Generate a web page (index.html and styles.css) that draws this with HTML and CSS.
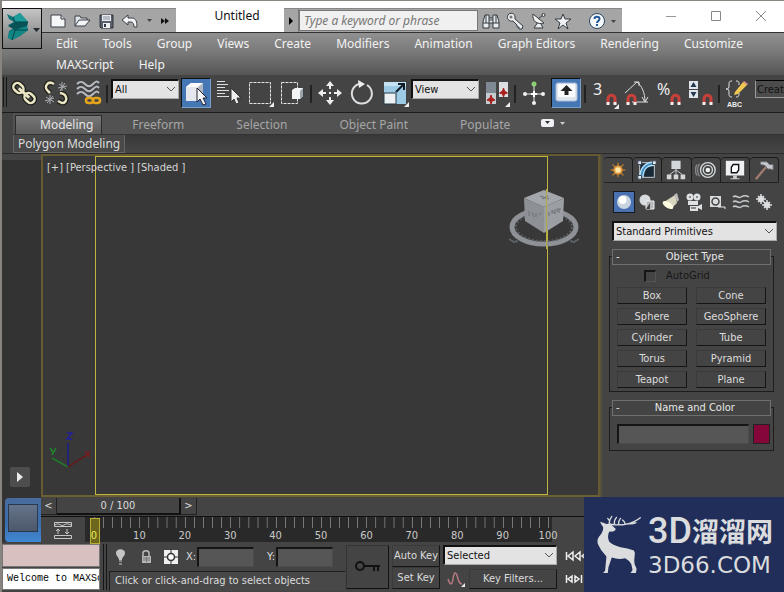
FILE: index.html
```html
<!DOCTYPE html>
<html lang="en">
<head>
<meta charset="utf-8">
<title>Untitled</title>
<link rel="stylesheet" href="styles.css">
</head>
<body>
<div class="app">
  <header class="header">
    <div class="titlebar">
      <div class="quick">
        <button class="qbtn" aria-label="New"><svg width="20" height="20" viewBox="0 0 20 20"><path d="M3 4h10l4 4v8H3z" fill="#f4f6f8" stroke="#3b4048"/><path d="M13 4v4h4" fill="#cfd4da" stroke="#3b4048"/></svg></button>
        <button class="qbtn" aria-label="Open"><svg width="20" height="20" viewBox="0 0 20 20"><path d="M3 15V5h5l1 2h6v3" fill="#dfe3e8" stroke="#3b4048"/><path d="M3 15l4-6h11l-5 6z" fill="#f2f4f6" stroke="#3b4048"/></svg></button>
        <button class="qbtn" aria-label="Save"><svg width="20" height="20" viewBox="0 0 20 20"><path d="M4 4h13v13H5l-1-1z" fill="#59606c" stroke="#30353d"/><path d="M6 4h9v6H6z" fill="#e9ecef"/><path d="M7 6h7M7 8h7" stroke="#8a9099"/><path d="M7 12h7v5H7z" fill="#eef0f2"/><path d="M8 13h2v3H8z" fill="#30353d"/></svg></button>
        <button class="qbtn" aria-label="Undo"><svg width="20" height="20" viewBox="0 0 20 20"><path d="M2 9l6-5v3h4c4 0 5 4 5 9h-3c0-3-1-5-3-5H8v3z" fill="#f2f4f6" stroke="#3b4048" stroke-linejoin="round"/></svg></button>
        <button class="qbtn narrow" aria-label="Undo list"><svg width="8" height="8" viewBox="0 0 8 8"><path d="M2 2h5L4.500 5z" fill="#444"/></svg></button>
        <button class="qbtn narrow" aria-label="More"><svg width="10" height="8" viewBox="0 0 10 8"><path d="M1 1l4 3-4 3zM5 1l4 3-4 3z" fill="#111"/></svg></button>
      </div>
      <h1 class="doc">Untitled</h1>
      <div class="search">
        <button class="sarrow" aria-label="Search menu"><svg width="8" height="10" viewBox="0 0 8 10"><path d="M2 1l4 4-4 4z" fill="#000"/></svg></button>
        <input class="sinput" type="text" placeholder="Type a keyword or phrase" aria-label="Search">
        <button class="sbtn" aria-label="Find"><svg width="18" height="18" viewBox="0 0 18 18"><path d="M3 3h4v3h4V3h4l2 7v6h-6v-5H7v5H1v-6z" fill="#e9ecee" stroke="#333b42"/><path d="M1 11h6M11 11h6M7 6v5M11 6v5M7 8h4M4 3v8M14 3v8" stroke="#333b42"/></svg></button>
        <button class="sbtn" aria-label="Key"><svg width="18" height="18" viewBox="0 0 18 18"><path d="M2 3c2-3 7-2 7 2v2l8 7-1 3h-3v-2h-2v-2L7 9C3 10 0 6 2 3z" fill="#e9ecee" stroke="#333b42"/><circle cx="5" cy="5" r="1.500" fill="#777"/></svg></button>
        <button class="sbtn" aria-label="Communication"><svg width="18" height="18" viewBox="0 0 18 18"><path d="M8 10l-4 6h9l-3-6z" fill="#e9ecee" stroke="#333b42"/><path d="M3 2c-1 7 4 11 11 9z" fill="#f2f2f2" stroke="#333b42"/><path d="M8 7l5-4" stroke="#333b42"/><circle cx="13.500" cy="3" r="1.500" fill="#eee" stroke="#333b42"/></svg></button>
        <button class="sbtn" aria-label="Favorites"><svg width="18" height="18" viewBox="0 0 18 18"><path d="M9 2l2 5h6l-5 4 2 6-5-4-5 4 2-6-5-4h6z" fill="#eef0f2" stroke="#333b42"/></svg></button>
        <button class="sbtn help" aria-label="Help"><svg width="18" height="18" viewBox="0 0 18 18"><circle cx="9" cy="9" r="7.500" fill="#f6f8fa" stroke="#2d4763"/><path d="M6.500 7c0-3 5-3 5 0 0 2-2.500 2-2.500 4" fill="none" stroke="#225a9a" stroke-width="2"/><path d="M8 12h2v2H8z" fill="#225a9a"/></svg></button>
        <button class="sbtn small" aria-label="Help menu"><svg width="8" height="8" viewBox="0 0 8 8"><path d="M1 3h5L3.500 6z" fill="#444"/></svg></button>
      </div>
      <div class="wincontrols">
        <button aria-label="Minimize"><svg width="12" height="12" viewBox="0 0 12 12"><path d="M1 6.500h10" stroke="#999"/></svg></button>
        <button aria-label="Maximize"><svg width="12" height="12" viewBox="0 0 12 12"><path d="M1.500 1.500h9v9h-9z" fill="none" stroke="#888"/></svg></button>
        <button aria-label="Close"><svg width="12" height="12" viewBox="0 0 12 12"><path d="M1 1l10 10M11 1L1 11" stroke="#888"/></svg></button>
      </div>
    </div>
    <nav class="menu">
      <a href="#">Edit</a><a href="#">Tools</a><a href="#">Group</a><a href="#">Views</a><a href="#">Create</a><a href="#">Modifiers</a><a href="#">Animation</a><a href="#">Graph Editors</a><a href="#">Rendering</a><a href="#">Customize</a><a href="#">MAXScript</a><a href="#">Help</a>
    </nav>
    <button class="appbtn" aria-label="Application menu"><svg width="38" height="38" viewBox="0 0 38 38"><path d="M4 4l6 3 7-4 8 9-1 4 1 4-8 6-8 4-4-2 1-7 5-3-6-3 6-3-5-3z" fill="#0d7377"/><path d="M4 4l6 3 2 5h13l-8-9-7 4z" fill="#1d9c9a"/><path d="M5 16l7-4h13l-1 4-12 4z" fill="#075357"/><path d="M6 22l6-2 12-4 1 4-8 6-8 4-4-2z" fill="#128685"/><path d="M10 7l2 5h13M12 20l-3 10M12 20l13 0" stroke="#064448" fill="none"/><path d="M30 18h7l-3.500 4z" fill="#222b30"/></svg></button>
  </header>

  <div class="toolbar">
    <span class="grip"></span>
    <button class="tool" aria-label="Link"><svg viewBox="0 0 32 32"><g transform="rotate(42 16 16)"><g fill="none" stroke="#1c1c16" stroke-width="5"><rect x="3" y="12" width="11" height="8" rx="4"/><rect x="18" y="12" width="11" height="8" rx="4"/></g><g fill="none" stroke="#e8e4c4" stroke-width="2.500"><rect x="3" y="12" width="11" height="8" rx="4"/><rect x="18" y="12" width="11" height="8" rx="4"/><path d="M9 16h14" stroke-width="3"/></g></g></svg></button>
    <button class="tool" aria-label="Unlink"><svg viewBox="0 0 32 32"><path d="M14 7c-6-4-11 3-6 7l2 2M20 16c8 1 8 10 2 10l-4-2" fill="none" stroke="#1c1c16" stroke-width="5"/><path d="M14 7c-6-4-11 3-6 7l2 2M20 16c8 1 8 10 2 10l-4-2" fill="none" stroke="#e8e4c4" stroke-width="2.500"/><path d="M19 7l7 5M25 6l-5 8M18 11l9-2M22 5v9M6 20l8 5M13 19l-6 7M5 24l9-3M10 18v9" stroke="#a9adb2"/></svg></button>
    <button class="tool" aria-label="Bind to space warp"><svg viewBox="0 0 32 32"><path d="M5 7c3-3 5-3 8 0s5 3 8 0 4-3 6-1M5 12c3-3 5-3 8 0s5 3 8 0 4-3 6-1M5 17c3-3 5-3 8 0s5 3 8 0 4-3 6-1" fill="none" stroke="#b6bcc2" stroke-width="2"/><g fill="none" stroke="#e5a51b" stroke-width="2.500"><rect x="14" y="21" width="7" height="5" rx="2.500"/><rect x="21" y="21" width="7" height="5" rx="2.500"/></g></svg></button>
    <span class="sep"></span>
    <label class="combo bar"><select aria-label="Selection filter"><option>All</option></select><svg viewBox="0 0 10 6"><path d="M1 1l4 4 4-4"/></svg></label>
    <button class="tool active" aria-label="Select object"><svg viewBox="0 0 32 32"><path d="M6 10l5-4h12v13l-5 5H6z" fill="#e4e8ec"/><path d="M6 10l5-4h12l-5 4z" fill="#fff"/><path d="M18 10l5-4v13l-5 5z" fill="#aeb6bf"/><path d="M17 11v14l3-3 3 6 3-1-3-6h4z" fill="#f5f5f5" stroke="#223"/></svg></button>
    <button class="tool" aria-label="Select by name"><svg viewBox="0 0 32 32"><path d="M5 4.500h8M5 7.500h11M5 10.500h8M5 13.500h12M5 16.500h8M5 19.500h12" stroke="#dcdfe2"/><path d="M19 11v14l3-3 2 5 3-1-2-5h4z" fill="#eee" stroke="#333"/></svg></button>
    <button class="tool" aria-label="Selection region"><svg viewBox="0 0 32 32"><path d="M5.500 5.500h21v21h-21z" fill="none" stroke="#e6e6e6" stroke-dasharray="3 1"/><path d="M30 25v5h-5z" fill="#eee"/></svg></button>
    <button class="tool" aria-label="Window crossing"><svg viewBox="0 0 32 32"><path d="M5.500 5.500h16v21h-16z" fill="none" stroke="#e6e6e6" stroke-dasharray="3 1"/><path d="M16 13l3-2h8v8l-3 3h-8z" fill="#f2f4f6"/><path d="M24 14l3-3v8l-3 3z" fill="#9ca5ad"/></svg></button>
    <span class="sep"></span>
    <button class="tool" aria-label="Move"><svg viewBox="0 0 32 32"><g fill="#eceef0"><path d="M16 4l4 5h-8zM16 28l4-5h-8zM4 16l5-4v8zM28 16l-5-4v8zM15 9h2v3h-2zM15 20h2v3h-2zM9 15h3v2H9zM20 15h3v2h-3zM15 15h2v2h-2z"/></g></svg></button>
    <button class="tool" aria-label="Rotate"><svg viewBox="0 0 32 32"><path d="M21 8a10 10 0 1 1-8-1" fill="none" stroke="#dde0e2" stroke-width="2"/><path d="M12 3l7 4-6 4z" fill="#eee"/></svg></button>
    <button class="tool" aria-label="Scale"><svg viewBox="0 0 32 32"><path d="M6 5h22v22H6z" fill="#9dcbe6"/><path d="M6 5h22v4H6z" fill="#c5e2f2"/><path d="M6 16h12v11H6z" fill="#eef1f3" stroke="#263845"/><path d="M18 15l7-7M20 7h6v6" stroke="#101c28" stroke-width="2" fill="none"/><path d="M31 25v5h-5z" fill="#eee"/></svg></button>
    <label class="combo bar"><select aria-label="Reference coordinate system"><option>View</option></select><svg viewBox="0 0 10 6"><path d="M1 1l4 4 4-4"/></svg></label>
    <button class="tool" aria-label="Pivot center"><svg viewBox="0 0 32 32"><path d="M6 5h10v15H6z" fill="#7f8994"/><path d="M6 16h10v11H6z" fill="#c6cbd0"/><path d="M19 5h9v15h-9z" fill="#dcdfe2"/><path d="M11 18l1 3 3 2-3 1-1 3-1-3-3-1 3-2zM23.500 11l1 3 3 2-3 1-1 3-1-3-3-1 3-2z" fill="#a81f1b" stroke="#a81f1b"/><path d="M30 25v5h-5z" fill="#eee"/></svg></button>
    <span class="sep"></span>
    <button class="tool" aria-label="Manipulate"><svg viewBox="0 0 32 32"><path d="M16 6v20M6 17h20" stroke="#e8eaec" stroke-dasharray="8 2"/><path d="M13 17h6M16 14v6" stroke="#fff" stroke-width="2"/><g fill="#f0f2f3"><circle cx="7" cy="17" r="2"/><circle cx="25" cy="17" r="2"/><circle cx="16" cy="26" r="2"/></g><circle cx="16" cy="7" r="2.500" fill="#8ad074"/></svg></button>
    <button class="tool active" aria-label="Keyboard override"><svg viewBox="0 0 32 32"><rect x="6" y="6" width="21" height="18" rx="2" fill="#dfe5ec" stroke="#a9bedb"/><rect x="8" y="7" width="17" height="13" rx="1" fill="#fafbfc"/><path d="M16.500 8l6 6h-4v4h-4v-4h-4z" fill="#222"/></svg></button>
    <span class="sep"></span>
    <button class="tool snap" aria-label="Snaps toggle"><span>3</span><svg viewBox="0 0 32 32"><use href="#magnet"/><path d="M31 27v5h-5z" fill="#eee"/></svg></button>
    <button class="tool snap" aria-label="Angle snap"><svg viewBox="0 0 32 32"><path d="M5 16L17 5M12 25h16M17 5c5 4 8 11 8 20M14 5h5v4M22 20l3 5 3-5" fill="none" stroke="#dfe1e3"/><use href="#magnet" x="-12"/></svg></button>
    <button class="tool snap" aria-label="Percent snap"><span>%</span><svg viewBox="0 0 32 32"><use href="#magnet"/></svg></button>
    <button class="tool snap" aria-label="Spinner snap"><svg viewBox="0 0 32 32"><path d="M5 4h9v8H5zM5 13h9v8H5z" fill="#dfe5ec"/><path d="M9.500 5l3 5h-6zM9.500 20l3-5h-6z" fill="#24384f"/><use href="#magnet"/></svg></button>
    <span class="sep"></span>
    <button class="tool named" aria-label="Edit named selection sets"><svg viewBox="0 0 32 32"><path d="M10 4c-3 0-3 1-3 4s0 4-3 4c3 0 3 1 3 4s0 4 3 4M14 4c3 0 3 1 3 4M14 20c3 0 3-1 3-4" fill="none" stroke="#e4e4e4"/><path d="M13 15L21 5l4 3-9 9-4 1z" fill="#f0c851"/><path d="M21 5l1-1 4 3-1 1z" fill="#e99"/></svg><span>ABC</span></button>
    <input class="setname" type="text" value="Create Selection Se" aria-label="Named selection set">
  </div>
  <svg class="defs" width="0" height="0"><defs><g id="magnet"><path d="M20 27v-5c0-5 7-5 7 0v5" fill="none" stroke="#c9403a" stroke-width="3"/><path d="M18.500 25h3v3h-3zM25.500 25h3v3h-3z" fill="#eee"/></g></defs></svg>

  <div class="ribbon">
    <div class="tabs">
      <button class="tab on">Modeling</button><button class="tab">Freeform</button><button class="tab">Selection</button><button class="tab">Object Paint</button><button class="tab">Populate</button>
      <button class="ribmin" aria-label="Minimize ribbon"><svg width="24" height="8" viewBox="0 0 24 8"><rect width="13" height="8" rx="2" fill="#f0f1f6"/><path d="M4 2h5L6.500 5z" fill="#333"/><path d="M19 3h5l-2.500 3z" fill="#ccc"/></svg></button>
    </div>
    <div class="ribpanel"><button>Polygon Modeling</button></div>
  </div>

  <div class="workspace">
    <aside class="rail">
      <button class="play" aria-label="Expand layouts"><svg width="8" height="10" viewBox="0 0 8 10"><path d="M1 0l6 5-6 5z" fill="#eee"/></svg></button>
      <button class="layout" aria-label="Viewport layout"><span></span></button>
    </aside>

    <main class="viewport">
      <div class="safe"></div>
      <p class="vlabel"><span>[+]</span><span>[Perspective ]</span><span>[Shaded ]</span></p>
      <svg class="axis" width="50" height="44" viewBox="0 0 50 44"><g fill="none" stroke-width="1.500"><path d="M22 38V14" stroke="#1c1c8c"/><path d="M22 38L6 29" stroke="#1e7a2a"/><path d="M22 38l17-11" stroke="#611a1c"/><path d="M21 4h5l-5 6h5" stroke="#20209a"/><path d="M4 19l3 4M10 19l-4 7" stroke="#1e8a2a"/><path d="M39 22l5 6M44 22l-5 6" stroke="#7b1a1c"/></g></svg>
      <svg class="cube" width="72" height="60" viewBox="0 0 72 60"><path d="M1 50l5 3 4-1M71 50l-5 3-4-1" stroke="#5c6068" stroke-width="2" fill="none"/><ellipse cx="36" cy="38" rx="32" ry="17" fill="none" stroke="#8e9196" stroke-width="5"/><ellipse cx="36" cy="38" rx="28" ry="14" fill="none" stroke="#5a5d62" stroke-width="2" stroke-dasharray="2 2"/><path d="M16 9L36 1l20 8-20 9z" fill="#a3a6aa"/><path d="M16 9l20 9v26L17 32z" fill="#8d9095"/><path d="M56 9l-20 9v26l19-12z" fill="#9b9ea3"/><path d="M32 7l9 3M34 10l6-3M21 22v5M24 23l2 5M28 24v4M31 25h2M41 27v-4M44 25v-4l3 4v-5M49 23v-3h4M51 20v4" stroke="#6c7076" fill="none"/><path d="M38.500 0v60" stroke="#b2aa42"/></svg>
    </main>

    <aside class="panel">
      <div class="ptabs">
        <button class="on" aria-label="Create"><svg viewBox="0 0 24 24"><path d="M12 4v16M4 12h16M6 6l12 12M18 6L6 18" stroke="#b5742b" stroke-width="1.500"/><circle cx="12" cy="12" r="5" fill="#e09a3c"/><circle cx="12" cy="12" r="3" fill="#ffe9ae"/></svg></button>
        <button aria-label="Modify"><svg viewBox="0 0 24 24"><path d="M4 4h16v16H4z" fill="#182a38" stroke="#cfd6dc"/><path d="M6 20C6 11 11 5 20 5" fill="none" stroke="#b9e1f6" stroke-width="5"/><path d="M6 20C6 11 11 5 20 5" fill="none" stroke="#3c8ac4" stroke-width="2"/><path d="M2 2h4v4H2zM2 18h4v4H2zM18 2h4v4h-4z" fill="#e6eaee" stroke="#345"/></svg></button>
        <button aria-label="Hierarchy"><svg viewBox="0 0 24 24"><path d="M7 2h10v9H7zM2 17h5v5H2zM9.500 17h5v5h-5zM17 17h5v5h-5z" fill="#d3d7da"/><path d="M12 11v6M12 12l-7 5M12 12l7 5" stroke="#d3d7da"/></svg></button>
        <button aria-label="Motion"><svg viewBox="0 0 24 24"><g fill="none" stroke="#d5d9dc" stroke-width="1.500"><circle cx="14" cy="12" r="8"/><circle cx="14" cy="12" r="5"/><path d="M5 5c-3 4-3 10 0 14M2 6c-2 4-2 8 0 12" stroke="#888"/></g><circle cx="14" cy="12" r="2.500" fill="#eee"/></svg></button>
        <button aria-label="Display"><svg viewBox="0 0 24 24"><path d="M2 2h20v16H2z" fill="#eef0f2"/><path d="M10 18h4v3H10zM7 21h10v1H7z" fill="#ccc"/><path d="M8 9l2-3h6v6l-2 3H8z" fill="#fff" stroke="#111" stroke-width="1.500"/></svg></button>
        <button aria-label="Utilities"><svg viewBox="0 0 24 24"><path d="M3 22L14 9" stroke="#a07d70" stroke-width="2.500"/><path d="M8 3h7l3 3h4v6l-3-1h-3l-3-4-5-1z" fill="#c5c9ce" stroke="#666"/></svg></button>
      </div>
      <div class="cats">
        <button class="on" aria-label="Geometry"><svg viewBox="0 0 20 20"><circle cx="10" cy="10" r="7" fill="#c9d4e0"/><circle cx="8.500" cy="8" r="4" fill="#fff"/></svg></button>
        <button aria-label="Shapes"><svg viewBox="0 0 20 20"><circle cx="8" cy="8" r="5.500" fill="#d9dcde"/><path d="M9 9h8v8H9z" fill="#b5b9bd" stroke="#eee"/><path d="M9 17l4-6v6z" fill="#444"/></svg></button>
        <button aria-label="Lights"><svg viewBox="0 0 20 20"><path d="M3 10L14 3l2 8-5 5z" fill="#d9d6c0"/><ellipse cx="7" cy="13" rx="6" ry="3" transform="rotate(32 7 13)" fill="#fffbe0"/><path d="M13 3l3-2 2 7-2 2z" fill="#bbb"/></svg></button>
        <button aria-label="Cameras"><svg viewBox="0 0 20 20"><g fill="#dfe2e4"><circle cx="6" cy="5" r="3.500"/><circle cx="13" cy="5" r="3.500"/><path d="M4 9h10v4H4zM6 14h8v5H6zM14 14l4-2v6l-4-2z"/></g><path d="M5 5h2M12 5h2M7 16h5" stroke="#333"/></svg></button>
        <button aria-label="Helpers"><svg viewBox="0 0 20 20"><path d="M3 4h11v11H3z" fill="#d8dbde"/><circle cx="8.500" cy="9.500" r="3.500" fill="none" stroke="#444" stroke-width="1.500"/><path d="M11 15h7v2" fill="none" stroke="#e8e8e8"/></svg></button>
        <button aria-label="Space warps"><svg viewBox="0 0 20 20"><path d="M2 5c3-3 5 2 8 0s5-2 8 0M2 10c3-3 5 2 8 0s5-2 8 0M2 15c3-3 5 2 8 0s5-2 8 0" fill="none" stroke="#c5c9cc" stroke-width="1.500"/></svg></button>
        <button aria-label="Systems"><svg viewBox="0 0 20 20"><path d="M7 2v10M2 7h10M4 4l6 6M10 4l-6 6M13 8v10M8 13h10M10 10l6 6M16 10l-6 6" stroke="#dcdfe1" stroke-width="1.500"/><circle cx="7" cy="7" r="3" fill="#dcdfe1"/><circle cx="13" cy="13" r="3" fill="#dcdfe1"/></svg></button>
      </div>
      <label class="combo wide"><select aria-label="Category"><option>Standard Primitives</option></select><svg viewBox="0 0 10 6"><path d="M1 1l4 4 4-4"/></svg></label>
      <section class="rollout first">
        <h2><span>-</span>Object Type</h2>
        <label class="auto"><input type="checkbox" disabled>AutoGrid</label>
        <div class="objs"><button>Box</button><button>Cone</button><button>Sphere</button><button>GeoSphere</button><button>Cylinder</button><button>Tube</button><button>Torus</button><button>Pyramid</button><button>Teapot</button><button>Plane</button></div>
      </section>
      <section class="rollout">
        <h2><span>-</span>Name and Color</h2>
        <div class="name"><input type="text" aria-label="Object name"><button class="swatch" aria-label="Object color"></button></div>
      </section>
    </aside>

    <div class="time">
      <div class="slider"><button aria-label="Previous frame">&lt;</button><button class="thumb">0 / 100</button><button aria-label="Next frame">&gt;</button></div>
      <div class="track">
        <button class="curve" aria-label="Mini curve editor"><svg width="20" height="20" viewBox="0 0 20 20"><path d="M1.500 2.500h17v4h-17zM1.500 15.500h17v3h-17z" fill="none" stroke="#c8c8c8"/><path d="M2 5c4-3 6 2 9 0s4-1 7 0M5 14V9M3 11l2-2 2 2M14 9v5M12 12l2 2 2-2" fill="none" stroke="#c8c8c8"/></svg></button>
        <div class="ruler"><div class="cell now"><span>0</span></div><div class="cell"><span>10</span></div><div class="cell"><span>20</span></div><div class="cell"><span>30</span></div><div class="cell"><span>40</span></div><div class="cell"><span>50</span></div><div class="cell"><span>60</span></div><div class="cell"><span>70</span></div><div class="cell"><span>80</span></div><div class="cell"><span>90</span></div><div class="cell last"><span>100</span></div></div>
      </div>
    </div>

    <footer class="status">
      <div class="script"><input class="macro" type="text" aria-label="Macro recorder"><input class="listener" type="text" value="Welcome to MAXScript." aria-label="Listener"></div>
      <span class="grip low"></span>
      <div class="coords">
        <div class="crow">
          <button aria-label="Isolate"><svg width="16" height="18" viewBox="0 0 16 18"><path d="M6 12c0-3-3-4-3-7 0-5 9-5 9 0 0 3-3 4-3 7z" fill="#c5c5c5"/><path d="M6 12h3v2H6zM6 15h3v2H6z" fill="#888"/></svg></button>
          <button aria-label="Lock"><svg width="16" height="18" viewBox="0 0 16 18"><path d="M5 8V5c0-3 6-3 6 0v3" fill="none" stroke="#bbb" stroke-width="1.500"/><path d="M4 8h9v7H4z" fill="#b5b5b5"/><path d="M5 10h7M5 12h7M8.500 9v5" stroke="#777"/></svg></button>
          <button aria-label="Absolute mode"><svg width="16" height="18" viewBox="0 0 16 18"><path d="M1 2h14v14H1z" fill="#f0f0f0"/><path d="M8 1v4M8 12v4M1 9h4M11 9h4" stroke="#333"/><circle cx="8" cy="9" r="3.500" fill="#fff" stroke="#333" stroke-width="1.500"/></svg></button>
          <label>X:<input type="text"></label>
          <label>Y:<input type="text"></label>
        </div>
        <p class="prompt">Click or click-and-drag to select objects</p>
      </div>
      <button class="setkey" aria-label="Set keys"><svg width="26" height="14" viewBox="0 0 26 14"><circle cx="5" cy="6" r="4" fill="none" stroke="#111" stroke-width="2"/><path d="M9 5h16v2H9zM18 7h2v4h-2zM22 7h2v4h-2z" fill="#111"/></svg></button>
      <div class="keys">
        <button>Auto Key</button>
        <label class="combo"><select aria-label="Key set"><option>Selected</option></select><svg viewBox="0 0 10 6"><path d="M1 1l4 4 4-4"/></svg></label>
        <button>Set Key</button>
        <div class="filters"><button class="tangent" aria-label="Tangents"><svg width="20" height="18" viewBox="0 0 20 18"><path d="M2 9c2 6 4 7 5 0s3-9 5 0c1 3 2 5 4 5" fill="none" stroke="#b87983" stroke-width="1.500"/><path d="M19 13v4h-4z" fill="#eee"/></svg></button><button class="kf">Key Filters...</button></div>
      </div>
      <div class="transport">
        <button aria-label="Go to start"><svg width="24" height="12" viewBox="0 0 24 12"><path d="M1.500 2v8M8 2L3 6l5 4zM15 2l-5 4 5 4zM22 2l-5 4 5 4z" fill="none" stroke="#eee" stroke-width="1.500"/></svg></button>
        <button aria-label="Key mode"><svg width="24" height="12" viewBox="0 0 24 12"><path d="M1.500 2v8M7 3L3 6l4 3zM10 3l4 3-4 3zM16.500 2v8" fill="none" stroke="#eee" stroke-width="1.500"/></svg></button>
      </div>
    </footer>
  </div>

  <div class="brand">
    <svg width="47" height="62" viewBox="45 70 140 185"><path d="M57 96Q66 99 76 103L88 101Q94 108 104 118Q103 124 96 125L84 126Q78 140 84 155Q94 166 118 172Q145 176 158 182Q164 190 160 200Q158 210 160 222L166 236 164 249H148L154 240 150 222Q142 210 132 205Q112 210 92 203L82 232 80 249H66L72 242 76 200Q58 182 50 162Q46 148 58 136Q68 122 66 112Q60 104 57 96Z" fill="#dadcde"/><path d="M84 103Q84 90 92 80M88 103Q112 108 136 103T177 84M100 104Q98 92 106 83M112 104Q111 94 118 86M132 103Q130 95 124 91M140 102Q154 104 164 99M86 94L80 86" fill="none" stroke="#dadcde" stroke-width="4" stroke-linecap="round"/></svg>
    <div class="words"><p class="cn"><b>3D</b><span lang="zh">溜溜网</span></p><p class="en">3D66.COM</p></div>
  </div>
</div>
</body>
</html>
```
FILE: styles.css
```css
* { box-sizing: border-box; }
body {
  margin: 0;
  background: #444;
  color: #dcdcdc;
  font: 11px/14px "DejaVu Sans Condensed", "Noto Sans", sans-serif;
}
h1, h2, p { margin: 0; font-weight: normal; }
button {
  margin: 0; padding: 0; border: 0;
  background: none; color: inherit; font: inherit;
  display: flex; align-items: center; justify-content: center;
}
input, select { margin: 0; padding: 0; border: 0; border-radius: 0; font: inherit; appearance: none; }
svg { display: block; flex: none; }
.defs { position: absolute; }
.app {
  position: relative;
  display: flex; flex-direction: column;
  min-height: 100vh;
  overflow: hidden;
  border-left: 2px solid #88847f;
}

/* title bar and menu */
.header { display: grid; grid-template: 32px auto / 40px 1fr; border-top: 1px solid #8a867f; }
.titlebar {
  grid-area: 1 / 1 / 2 / 3;
  display: flex; padding-left: 40px;
  background: #fff; border-bottom: 1px solid #333;
}
.quick, .search { display: flex; margin-top: 7px; background: #a5a5a5; border-top: 1px solid #888; }
.quick { width: 134px; padding-left: 4px; }
.qbtn { width: 24px; }
.qbtn.narrow { width: 14px; }
.qbtn.narrow:last-child { margin-left: 2px; }
.doc { flex: 1; text-align: center; color: #111; font: 12px/30px "Noto Sans", sans-serif; padding-left: 14px; }
.search { width: 338px; }
.sarrow { width: 15px; border-right: 1px solid #777; }
.sinput {
  width: 179px; margin: 1px 1px 1px 0; padding-left: 4px;
  border: 1px solid #777; background: #f0f0f0;
  font: italic 12px "Noto Sans", sans-serif; color: #555;
}
.sinput::placeholder { color: #777; }
.sbtn { width: 24px; }
.sbtn.help { margin-left: 10px; }
.sbtn.small { width: 10px; }
.wincontrols { display: flex; width: 162px; padding-left: 26px; height: 29px; }
.wincontrols button { width: 45px; }
.menu {
  grid-area: 2 / 1 / 3 / 3;
  display: flex; flex-wrap: wrap; column-gap: 25px;
  padding: 0 20px 0 54px;
  background: linear-gradient(#919191, #767676 50%, #555);
}
.menu a { color: #f2f2f2; text-decoration: none; font: 12px/21px "Noto Sans", sans-serif; }
.appbtn {
  grid-area: 1 / 1 / 3 / 2; z-index: 1; justify-self: start; align-self: start;
  width: 40px; height: 41px; margin-top: 7px;
  border: 1px solid #111; background: linear-gradient(#c4c4c4, #777);
}

/* main toolbar */
.toolbar { display: flex; align-items: flex-start; height: 38px; padding-top: 2px; background: #444; border-bottom: 1px solid #1c1c1c; }
.grip { flex: none; width: 4px; height: 30px; margin: 0 1px; border: solid #161616; border-width: 0 1px; }
.tool { position: relative; flex: none; width: 32px; height: 32px; }
.tool svg { width: 32px; height: 32px; }
.tool.active { width: 30px; height: 30px; margin: 1px; background: #4577b5; border: 1px solid #111; border-right-color: #7aa0cc; border-bottom-color: #7aa0cc; }
.tool.snap span { position: absolute; left: 5px; top: 2px; font: 16px/20px "Noto Sans", sans-serif; color: #eee; }
.tool.named span { position: absolute; left: 5px; bottom: 0; font: bold 7px/8px "Liberation Sans", sans-serif; color: #eee; }
.sep { flex: none; width: 2px; height: 18px; margin: 8px 2px 0; background: #222; }
.combo { position: relative; display: block; }
.combo select {
  display: block; width: 100%; height: 20px; padding-left: 2px;
  background: #e3e3e3; color: #111;
  border: 1px solid #aaa; border-top: 2px solid #111; border-left: 2px solid #111;
}
.combo svg { position: absolute; right: 3px; top: 7px; width: 10px; height: 6px; fill: none; stroke: #555; pointer-events: none; }
.combo.bar { flex: none; width: 68px; margin: 2px 1px 0; }
.setname { flex: 1; min-width: 0; width: 20px; height: 18px; margin: 3px 0 0 1px; padding-left: 1px; background: #4c4c4c; color: #111; border: 1px solid #999; border-top-color: #000; border-right: 0; }

/* ribbon */
.ribbon { position: relative; padding-left: 11px; height: 41px; background: #444; border-bottom: 1px solid #2a2a2a; }
.tabs { display: flex; height: 22px; padding: 2px 0 0 2px; background: #525252; border-bottom: 1px solid #333; }
.tab { color: #a6a6a6; font: 12px/18px "Noto Sans", sans-serif; }
.tab.on { padding: 0 8px 0 24px; border: 1px solid #2b2b2b; border-bottom: 0; background: linear-gradient(#777, #5c5c5c); color: #e6e6e6; }
.tab + .tab { padding: 0 24px 0 28px; }
.tab.on + .tab { padding-left: 30px; }
.ribmin { margin-left: 7px; height: 16px; }
.ribpanel { display: flex; height: 18px; background: linear-gradient(#383838, #464646); }
.ribpanel button { padding: 0 4px; font: 12px/17px "Noto Sans", sans-serif; border: 1px solid #666; border-top: 0; background: #494949; }

/* workspace */
.workspace {
  flex: 1; display: grid;
  grid-template: 1fr 45px 50px / 39px minmax(0, 1fr) 184px;
  grid-template-areas: "rail view panel" "rail time panel" "status status panel";
}
.rail { grid-area: rail; display: flex; flex-direction: column; justify-content: flex-end; background: #333; border-top: 6px solid #464646; padding-left: 3px; }
.play { width: 20px; height: 20px; margin: 0 0 11px 5px; border-radius: 2px; background: #4d4d4d; }
.layout { width: 36px; height: 44px; padding: 0 0 4px; background: linear-gradient(#486b9d, #3c6fae 60%, #4087d4); border-radius: 4px 0 0 4px; }
.layout span { width: 30px; height: 28px; border: 1px solid #28384e; background: linear-gradient(#65738a, #4c586a); }
.viewport { grid-area: view; position: relative; display: flex; padding: 0 50px 0 52px; background: #383838; border: 2px solid #655a32; border-bottom-color: #6b6033; }
.safe { flex: 1; border: 1px solid #bdb53e; }
.vlabel { position: absolute; left: 4px; top: 5px; display: flex; gap: 3px; color: #d6d6d6; }
.axis { position: absolute; left: 3px; bottom: 22px; }
.cube { position: absolute; right: 18px; top: 33px; }

/* command panel */
.panel { grid-area: panel; background: #444; border-left: 2px solid #55503a; padding: 3px 9px 0; }
.ptabs { display: flex; margin: 0 -4px 8px -7px; border-bottom: 1px solid #222; }
.ptabs button { flex: 1; height: 25px; border: 1px solid #1c1c1c; border-width: 1px 1px 0 0; border-radius: 4px 4px 0 0; }
.ptabs svg { width: 22px; height: 22px; }
.cats { display: flex; margin: 0 0 8px 2px; gap: 1px; }
.cats button { width: 23px; height: 22px; }
.cats .on { background: #4a72b2; border: 1px solid #14181f; }
.cats svg { width: 20px; height: 20px; }
.combo.wide { margin: 0 -2px 8px 1px; }
.rollout { margin: 15px 0 0 -2px; width: 165px; padding: 7px 7px 6px; border: 1px solid #1d1d1d; }
.rollout.first { padding-bottom: 3px; }
.rollout h2 { position: relative; margin: -15px -5px 3px -5px; border: 1px solid #6f6f6f; background: #444; text-align: center; color: #e8e8e8; font-size: 11px; line-height: 14px; }
.rollout h2 span { float: left; margin-left: 3px; }
.auto { display: flex; align-items: center; gap: 10px; padding-left: 27px; margin-bottom: 4px; height: 15px; color: #161616; }
.auto input { width: 12px; height: 12px; border: 1px solid #555; border-top: 2px solid #161616; border-left: 2px solid #161616; }
.objs { display: grid; grid-template-columns: 1fr 1fr; gap: 4px 9px; }
.objs button, .keys > button, .kf { height: 17px; border: 1px solid #3a3a3a; border-right-color: #151515; border-bottom-color: #151515; }
.name { display: flex; gap: 4px; padding-top: 5px; margin-right: -4px; }
.name input, .crow input { background: #565656; border: 1px solid #4c4c4c; border-top: 2px solid #151515; border-left: 2px solid #151515; color: #eee; }
.name input { flex: 1; min-width: 0; height: 20px; }
.swatch { width: 17px; height: 20px; background: #850638; border: 1px solid #222; }

/* time controls */
.time { grid-area: time; background: #444; }
.slider { display: flex; height: 19px; }
.slider button { width: 16px; height: 17px; margin-top: 1px; border: 1px solid #222; border-width: 0 1px 1px 0; }
.slider .thumb { width: 124px; border-right-width: 2px; border-bottom-width: 2px; border-color: #111; }
.track { display: flex; height: 26px; border-top: 1px solid #111; }
.curve { width: 44px; height: 25px; }
.ruler { flex: 1; display: flex; margin-right: 48px; padding: 0 3px 0 9px; background: #292929; }
.cell { flex: 1; padding-top: 12px; background: linear-gradient(90deg, #777 1px, transparent 1px) 0 0 / 20% 11px repeat-x; }
.cell span { display: block; width: 30px; margin-left: -15px; text-align: center; color: #c9c9c9; }
.cell.last { flex: none; width: 1px; }
.cell.now { position: relative; }
.cell.now::before { content: ""; position: absolute; left: -4px; top: 1px; width: 8px; height: 24px; border: 1px solid #b7ae35; background: #6c671c; }
.cell.now span { position: relative; color: #eeea55; }

/* status bar */
.status { grid-area: status; display: flex; padding: 2px 0; background: #444; }
.script { display: flex; flex-direction: column; gap: 1px; width: 98px; }
.macro { height: 23px; background: #d8bfc0; border: 1px solid #777; }
.listener { height: 23px; padding-left: 4px; background: #fff; color: #000; border: 1px solid #777; font: 10px "Liberation Mono", monospace; }
.grip.low { height: 46px; margin: 0 2px 0 3px; }
.coords { width: 236px; }
.crow { display: flex; align-items: center; height: 25px; padding-left: 0; }
.crow button { width: 27px; }
.crow label { display: flex; align-items: center; gap: 1px; margin-left: 1px; margin-right: 12px; }
.crow button + label { margin-left: 2px; }
.crow input { width: 57px; height: 20px; }
.prompt { height: 20px; margin-top: 2px; padding: 2px 0 0 5px; border: 1px solid #1c1c1c; border-width: 1px 0 0 1px; background: #484848; white-space: nowrap; }
.setkey { width: 43px; height: 44px; margin: 1px 3px 0 1px; border: 1px solid #333; border-right-color: #111; border-bottom-color: #111; }
.keys { display: grid; grid-template: 22px 22px / 48px 114px; column-gap: 3px; margin-top: 1px; white-space: nowrap; }
.keys > button { height: auto; }
.filters { display: flex; padding: 2px 0 0; }
.tangent { width: 26px; }
.kf { flex: 1; height: 20px; }
.transport { display: flex; flex-direction: column; justify-content: space-around; margin-left: 8px; }

/* watermark over the lower right corner */
.brand { position: absolute; right: 0; bottom: 0; display: flex; gap: 5px; width: 200px; height: 95px; padding: 16px 0 0 12px; background: #202e59; color: #dadcde; white-space: nowrap; }
.cn { display: flex; align-items: center; height: 36px; }
.cn b { font: 500 36px/36px Roboto, sans-serif; }
.cn span { font: bold 27px/36px "Noto Sans CJK SC", sans-serif; }
.en { margin-top: 5px; font: 23px/22px "DejaVu Sans", sans-serif; }
```
